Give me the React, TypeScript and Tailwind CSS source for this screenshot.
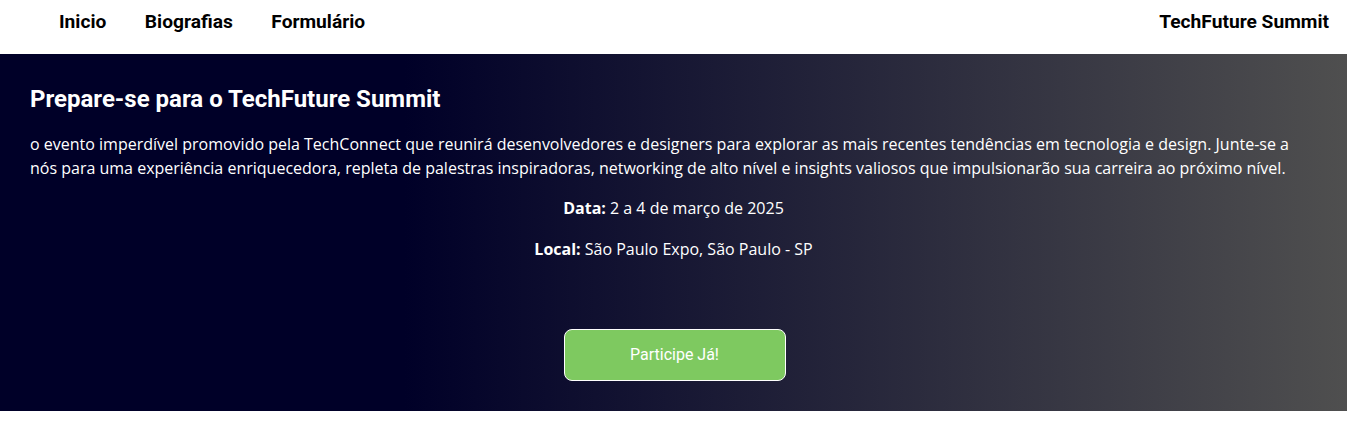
export default function App() {
    return (
        <div className="w-full bg-white font-['Roboto',sans-serif]">
            {/* Top navigation */}
            <header className="h-[54px] flex items-center justify-between pl-[59px] pr-[18px] pb-[10px]">
                <nav className="flex items-center gap-[38.5px] text-[19.2px] font-bold text-black">
                    <a href="#">Inicio</a>
                    <a href="#">Biografias</a>
                    <a href="#">Formulário</a>
                </nav>
                <span className="text-[19.2px] font-bold text-black">TechFuture Summit</span>
            </header>

            {/* Hero */}
            <section className="px-[30px] pt-[31px] pb-[30px] text-white bg-[linear-gradient(to_right,#000028_30%,#4f4f4f)]">
                <h2 className="text-[24px] leading-[28px] font-bold">Prepare-se para o TechFuture Summit</h2>
                <p className="mt-[19px] font-['Open_Sans',sans-serif] text-[16px] leading-[24px]">
                    o evento imperdível promovido pela TechConnect que reunirá desenvolvedores e designers para explorar as mais recentes tendências em tecnologia e design. Junte-se a nós para uma experiência enriquecedora, repleta de palestras inspiradoras, networking de alto nível e insights valiosos que impulsionarão sua carreira ao próximo nível.
                </p>
                <p className="mt-[16px] text-center font-['Open_Sans',sans-serif] text-[16px] leading-[24px]">
                    <strong>Data:</strong> 2 a 4 de março de 2025
                </p>
                <p className="mt-[17px] text-center font-['Open_Sans',sans-serif] text-[16px] leading-[24px]">
                    <strong>Local:</strong> São Paulo Expo, São Paulo - SP
                </p>
                <div className="mt-[68px] flex justify-center pl-[2px]">
                    <button className="w-[222px] h-[52px] rounded-lg border border-white bg-[#7ec960] text-white text-[16px]">
                        Participe Já!
                    </button>
                </div>
            </section>
        </div>
    );
}
